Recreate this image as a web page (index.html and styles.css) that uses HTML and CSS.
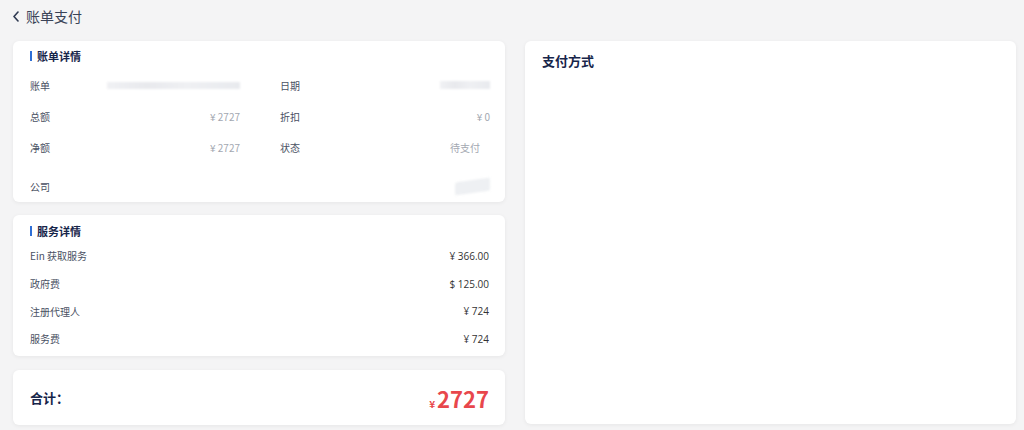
FILE: index.html
```html
<!DOCTYPE html>
<html lang="zh">
<head>
<meta charset="utf-8">
<title>账单支付</title>
<link rel="stylesheet" href="styles.css">
</head>
<body>
<header class="top">
  <svg class="back" width="8" height="11" viewBox="0 0 8 11"><path d="M6 1 L2 5.5 L6 10" fill="none" stroke="#2f3a52" stroke-width="1.6" stroke-linecap="round" stroke-linejoin="round"/></svg>
  <span class="top-title">账单支付</span>
</header>
<main class="layout">
  <section class="left">
    <div class="card bill">
      <h2 class="sec-title">账单详情</h2>
      <div class="grid">
        <div class="row"><span class="lbl">账单</span><span class="blur blur-long"></span></div>
        <div class="row"><span class="lbl">日期</span><span class="blur blur-date"></span></div>
        <div class="row"><span class="lbl">总额</span><span class="val">¥ 2727</span></div>
        <div class="row"><span class="lbl">折扣</span><span class="val">¥ 0</span></div>
        <div class="row"><span class="lbl">净额</span><span class="val">¥ 2727</span></div>
        <div class="row"><span class="lbl">状态</span><span class="val status">待支付</span></div>
        <div class="row last"><span class="lbl">公司</span><span></span></div>
        <div class="row last"><span></span><span class="blur blur-co"></span></div>
      </div>
    </div>
    <div class="card service">
      <h2 class="sec-title">服务详情</h2>
      <div class="srow"><span class="lbl">Ein 获取服务</span><span class="sval">¥ 366.00</span></div>
      <div class="srow"><span class="lbl">政府费</span><span class="sval">$ 125.00</span></div>
      <div class="srow"><span class="lbl">注册代理人</span><span class="sval">¥ 724</span></div>
      <div class="srow"><span class="lbl">服务费</span><span class="sval">¥ 724</span></div>
    </div>
    <div class="card total">
      <span class="total-lbl">合计：</span>
      <span class="total-val"><span class="cur">¥</span>2727</span>
    </div>
  </section>
  <section class="card right">
    <h2 class="pay-title">支付方式</h2>
  </section>
</main>
</body>
</html>
```
FILE: styles.css
```css
* { box-sizing: border-box; }
body {
  margin: 0;
  width: 1024px;
  height: 430px;
  background: #f4f4f5;
  font-family: "Noto Sans CJK SC", "Noto Sans", sans-serif;
  color: #333;
  overflow: hidden;
}
.top {
  height: 33px;
  display: flex;
  align-items: center;
  padding: 0 0 1px 12px;
  gap: 6px;
}
.top-title {
  font-size: 14px;
  color: #3a4357;
  line-height: 1;
}
.layout {
  display: flex;
  gap: 20px;
  padding: 8px 8px 0 13px;
}
.left {
  width: 492px;
  display: flex;
  flex-direction: column;
  gap: 13px;
}
.card {
  background: #fff;
  border-radius: 6px;
  box-shadow: 0 1px 4px rgba(0,0,0,0.06);
}
.sec-title {
  margin: 0;
  font-size: 11px;
  line-height: 14px;
  font-weight: 700;
  color: #17254a;
  display: flex;
  align-items: center;
  gap: 5px;
}
.sec-title::before {
  content: "";
  width: 2px;
  height: 10px;
  background: #2f6fd6;
}
.bill {
  height: 161px;
  padding: 8px 15px 0 17px;
}
.grid {
  margin-top: 6.5px;
  display: grid;
  grid-template-columns: 210px 210px;
  column-gap: 40px;
}
.row {
  height: 31px;
  display: flex;
  align-items: center;
  justify-content: space-between;
}
.row.last { margin-top: 8px; }
.lbl {
  font-size: 10px;
  color: #4a5163;
}
.val {
  font-size: 10px;
  color: #a3a8b1;
}
.status { padding-right: 10px; }
.blur {
  display: block;
  background: linear-gradient(90deg, #f0f1f4, #e8e9ed 30%, #eff0f3 60%, #e8eaee);
  filter: blur(1px);
}
.blur-long { width: 133px; height: 7px; }
.blur-date { width: 50px; height: 8px; }
.blur-co { width: 35px; height: 13px; background: #eef0f3; border-radius: 2px; transform: skewY(-8deg); }
.service {
  height: 141px;
  padding: 9px 16px 0 17px;
}
.service .sec-title { margin-bottom: 4px; }
.srow {
  height: 27.7px;
  display: flex;
  align-items: center;
  justify-content: space-between;
}
.sval {
  font-size: 10px;
  color: #333;
  font-family: "Open Sans", "Noto Sans", sans-serif;
}
.total {
  height: 55px;
  margin-top: 1px;
  padding: 0 16px 0 17px;
  display: flex;
  align-items: center;
  justify-content: space-between;
}
.total-lbl {
  font-size: 13px;
  font-weight: 700;
  color: #17254a;
}
.total-val {
  font-size: 22px;
  font-weight: 700;
  color: #e8474c;
  line-height: 1;
  display: flex;
  align-items: baseline;
  gap: 2px;
}
.cur { font-size: 10px; }
.right {
  width: 491px;
  height: 383px;
  padding: 11px 17px;
}
.pay-title {
  margin: 0;
  font-size: 13px;
  line-height: 18px;
  font-weight: 700;
  color: #17254a;
}
```
